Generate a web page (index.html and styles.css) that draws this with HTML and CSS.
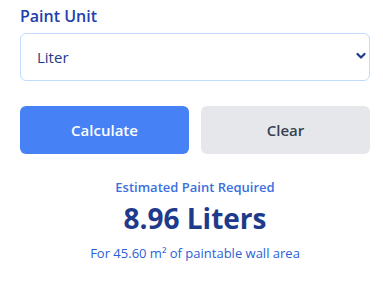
FILE: index.html
```html
<!DOCTYPE html>
<html>
<head>
<meta charset="utf-8">
<link rel="stylesheet" href="styles.css">
</head>
<body>
<div class="card">
  <label class="label" for="unit">Paint Unit</label>
  <div class="select-wrap">
    <select id="unit" class="select">
      <option>Liter</option>
      <option>Gallon</option>
    </select>
    <svg class="chev" width="10" height="8" viewBox="0 0 10 8"><path d="M1.5 2 L5 5.5 L8.5 2" fill="none" stroke="#1e3a8a" stroke-width="2.2" stroke-linecap="round" stroke-linejoin="round"/></svg>
  </div>
  <div class="buttons">
    <button class="btn btn-primary">Calculate</button>
    <button class="btn btn-secondary">Clear</button>
  </div>
  <div class="result">
    <div class="result-title">Estimated Paint Required</div>
    <div class="result-value">8.96 Liters</div>
    <div class="result-note">For 45.60 m² of paintable wall area</div>
  </div>
</div>
</body>
</html>
```
FILE: styles.css
```css
* { box-sizing: border-box; }
html, body { margin: 0; padding: 0; background: #ffffff; }
body { font-family: "Open Sans", "Noto Sans", sans-serif; }
.card { padding: 5px 13px 0 20px; width: 383px; }
.label { display: block; font-size: 16px; font-weight: 600; color: #1e40af; line-height: 23px; margin-bottom: 5px; }
.select-wrap { position: relative; }
.select {
  display: block; width: 100%; height: 48px; padding: 0 16px;
  border: 1px solid #bfdbfe; border-radius: 6px; background: #fff;
  font-family: inherit; font-size: 15px; color: #1e3a8a;
  appearance: none; -webkit-appearance: none; outline: none;
}
.chev { position: absolute; right: 4px; top: 19px; }
.buttons { display: flex; gap: 12px; margin-top: 25px; }
.btn {
  flex: 1; height: 48px; border: none; border-radius: 6px;
  font-family: inherit; font-size: 15px; font-weight: 600;
}
.btn-primary { background: #4682f5; color: #fff; }
.btn-secondary { background: #e5e7eb; color: #374151; }
.result { text-align: center; margin-top: 24px; }
.result-title { font-size: 13px; font-weight: 600; color: #3b6fe0; line-height: 18px; }
.result-value { font-size: 28px; font-weight: 700; color: #1e3a8a; line-height: 38px; margin-top: 3px; }
.result-note { font-size: 13px; color: #2b5fd9; line-height: 20px; margin-top: 6px; }
```
